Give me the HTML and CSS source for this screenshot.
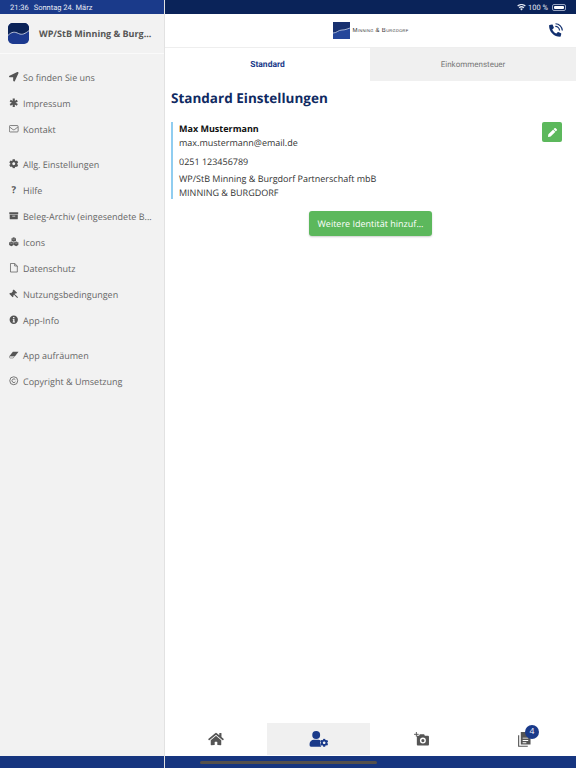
FILE: index.html
```html
<!DOCTYPE html>
<html lang="de">
<head>
    <meta charset="UTF-8">
    <meta name="viewport" content="width=device-width, initial-scale=1.0">
    <title>WP/StB Minning &amp; Burgdorf</title>
    <link rel="stylesheet" href="styles.css">
</head>
<body>
    <svg class="defs" width="0" height="0">
        <symbol id="cog" viewBox="0 0 512 512"><path d="M487.4 315.7l-42.6-24.6c4.3-23.2 4.3-47 0-70.2l42.6-24.6c4.9-2.8 7.1-8.6 5.5-14-11.1-35.6-30-67.8-54.7-94.6-3.8-4.1-10-5.1-14.8-2.3L380.8 110c-17.9-15.4-38.5-27.3-60.8-35.1V25.8c0-5.6-3.9-10.5-9.4-11.7-36.7-8.2-74.3-7.8-109.2 0-5.5 1.2-9.4 6.1-9.4 11.7V75c-22.2 7.9-42.8 19.8-60.8 35.1L88.7 85.5c-4.9-2.8-11-1.9-14.8 2.3-24.7 26.7-43.6 58.9-54.7 94.6-1.7 5.4.6 11.2 5.5 14L67.3 221c-4.3 23.2-4.3 47 0 70.2l-42.6 24.6c-4.9 2.8-7.1 8.6-5.5 14 11.1 35.6 30 67.8 54.7 94.6 3.8 4.1 10 5.1 14.8 2.3l42.6-24.6c17.9 15.4 38.5 27.3 60.8 35.1v49.2c0 5.6 3.9 10.5 9.4 11.7 36.7 8.2 74.3 7.8 109.2 0 5.5-1.2 9.4-6.1 9.4-11.7v-49.2c22.2-7.9 42.8-19.8 60.8-35.1l42.6 24.6c4.9 2.8 11 1.9 14.8-2.3 24.7-26.7 43.6-58.9 54.7-94.6 1.5-5.5-.7-11.3-5.6-14.1zM256 336c-44.1 0-80-35.9-80-80s35.9-80 80-80 80 35.9 80 80-35.9 80-80 80z"/></symbol>
    </svg>

    <div class="app">
        <aside class="sidebar">
            <div class="status status-left"><span>21:36</span><span>Sonntag 24. März</span></div>
            <div class="side-head">
                <svg class="app-logo" viewBox="0 0 22 22">
                    <rect width="22" height="22" rx="5" fill="#1c3a8f"/>
                    <path d="M0 13 C4 9 7 9 11 11 C15 13 18 11 22 8 V5 A5 5 0 0 0 17 0 H5 A5 5 0 0 0 0 5 Z" fill="#0b2358"/>
                    <path d="M0 13 C4 9 7 9 11 11 C15 13 18 11 22 8" fill="none" stroke="#e8ecf4" stroke-width=".8"/>
                </svg>
                <span class="side-title">WP/StB Minning &amp; Burg...</span>
            </div>
            <nav class="side-nav">
                <div class="nav-group">
                    <a class="nav-item"><svg class="nav-icon" viewBox="0 0 512 512"><path d="M444.52 3.52L28.74 195.42c-47.97 22.39-31.98 92.75 19.19 92.75h175.91v175.91c0 51.17 70.36 67.17 92.75 19.19l191.9-415.78c15.99-38.39-25.59-79.97-63.97-63.97z"/></svg>So finden Sie uns</a>
                    <a class="nav-item"><svg class="nav-icon" viewBox="0 0 16 16"><path d="M8 1v14M2 4.500l12 7M14 4.500l-12 7" fill="none" stroke="currentColor" stroke-width="3.600"/></svg>Impressum</a>
                    <a class="nav-item"><svg class="nav-icon" viewBox="0 0 16 16"><rect x=".6" y="2.600" width="14.800" height="10.800" rx="1.500" fill="none" stroke="currentColor" stroke-width="1.200"/><path d="M1 5l5.500 4.300q1.500 1 3 0L15 5" fill="none" stroke="currentColor" stroke-width="1.200"/></svg>Kontakt</a>
                </div>
                <div class="nav-group">
                    <a class="nav-item"><svg class="nav-icon"><use href="#cog"/></svg>Allg. Einstellungen</a>
                    <a class="nav-item"><span class="nav-icon nav-glyph">?</span>Hilfe</a>
                    <a class="nav-item"><svg class="nav-icon" viewBox="0 0 16 16"><path d="M.5 2h15v3.500H.5zM1.200 6.500h13.600V13a1 1 0 0 1-1 1H2.200a1 1 0 0 1-1-1zM5.500 8v1.400h5V8z" fill-rule="evenodd"/></svg>Beleg-Archiv (eingesendete B...</a>
                    <a class="nav-item"><svg class="nav-icon" viewBox="0 0 16 16"><path d="M8 .5l3.800 1.500v4.400L8 8 4.200 6.400V2zM4 7.500l3.800 1.500v4.400L4 15.500.2 13.400V9zM12 7.500L15.800 9v4.400L12 15.500l-3.800-2.100V9z"/><path d="M4.600 2.600L8 4l3.400-1.400M.8 9.400L4 10.700l3.200-1.300M8.800 9.400l3.200 1.300 3.200-1.300" fill="none" stroke="#f2f2f2" stroke-width=".6"/></svg>Icons</a>
                    <a class="nav-item"><svg class="nav-icon" viewBox="0 0 16 16"><path d="M2.500 .8h7L14 5v10.200H2.500zM9.500 .8V5H14" fill="none" stroke="currentColor" stroke-width="1.200" stroke-linejoin="round"/></svg>Datenschutz</a>
                    <a class="nav-item"><svg class="nav-icon" viewBox="0 0 16 16"><path d="M8 .8l5.600 5.400-2 2-1-1-1.300 1.300 6 5.200-1.500 1.600-5.400-5.700-1.300 1.300 1 1-2 2L.4 8.200l2-2 1 1 3-3-.4-1.200z"/></svg>Nutzungsbedingungen</a>
                    <a class="nav-item"><svg class="nav-icon" viewBox="0 0 16 16"><path d="M8 1a7 7 0 1 0 0 14A7 7 0 0 0 8 1zM6.800 3.200h2.400v2.200H6.800zM6.200 6.600h3v4.400h.8v1.600H6.200V11h.8V8.200h-.8z" fill-rule="evenodd"/></svg>App-Info</a>
                </div>
                <div class="nav-group">
                    <a class="nav-item"><svg class="nav-icon" viewBox="0 0 16 16"><path d="M6.500 3H16l-5.500 7H1z"/><path d="M1 10.400l-.6 1.800 1 1.300H7l2.400-3.100z" fill="none" stroke="currentColor" stroke-width=".9"/></svg>App aufräumen</a>
                    <a class="nav-item"><svg class="nav-icon" viewBox="0 0 16 16"><circle cx="8" cy="8" r="6.700" fill="none" stroke="currentColor" stroke-width="1.300"/><path d="M10.700 6.200a3.100 3.100 0 1 0 0 3.600" fill="none" stroke="currentColor" stroke-width="1.300"/></svg>Copyright &amp; Umsetzung</a>
                </div>
            </nav>
            <div class="bottom-strip"></div>
        </aside>

        <main class="main">
            <div class="status status-right">
                <svg class="wifi" viewBox="0 0 16 12"><path d="M8 11.500L5.600 8.600a3.600 3.600 0 0 1 4.800 0zM4.500 7.400L3 5.600a7.400 7.400 0 0 1 10 0l-1.500 1.800a5.200 5.200 0 0 0-7 0zM1.900 4.400L.4 2.600a11.400 11.400 0 0 1 15.200 0l-1.500 1.800a9.100 9.100 0 0 0-12.200 0z"/></svg>
                <span>100 %</span>
                <span class="battery"><span class="battery-fill"></span></span>
            </div>

            <header class="top-bar">
                <div class="brand">
                    <svg class="brand-mark" viewBox="0 0 17 17">
                        <rect width="17" height="17" fill="#17306f"/>
                        <path d="M0 11 C4 11 5 8 9 8 C12 8 14 7 17 6 V17 H0 Z" fill="#25479a"/>
                        <path d="M0 11 C4 11 5 8 9 8 C12 8 14 7 17 6" fill="none" stroke="#dfe6f2" stroke-width=".7"/>
                    </svg>
                    <span class="brand-name">Minning &amp; Burgdorf</span>
                </div>
                <svg class="phone" viewBox="0 0 16 16">
                    <path transform="translate(14.200 1.600) scale(-.0255 .0255)" d="M493.4 24.6l-104-24c-11.3-2.6-22.9 3.3-27.5 13.9l-48 112c-4.2 9.8-1.4 21.3 6.9 28l60.6 49.6c-36 76.7-98.9 140.5-177.2 177.2l-49.6-60.6c-6.8-8.3-18.2-11.1-28-6.9l-112 48C3.9 366.5-2 378.1.6 389.4l24 104C27.1 504.2 36.7 512 48 512c256.1 0 464-207.5 464-464 0-11.2-7.7-20.9-18.6-23.4z"/>
                    <path d="M7.800 3.700a4.500 4.500 0 0 1 4.500 4.400M8 .8a7.500 7.500 0 0 1 7.300 7.300" fill="none" stroke="currentColor" stroke-width="1.300"/>
                </svg>
            </header>

            <div class="tabs">
                <div class="tab tab-active">Standard</div>
                <div class="tab">Einkommensteuer</div>
            </div>

            <section class="content">
                <h1>Standard Einstellungen</h1>
                <div class="identity">
                    <div class="identity-text">
                        <div class="identity-name">Max Mustermann</div>
                        <div>max.mustermann@email.de</div>
                        <div class="identity-phone">0251 123456789</div>
                        <div class="identity-firm">WP/StB Minning &amp; Burgdorf Partnerschaft mbB</div>
                        <div>MINNING &amp; BURGDORF</div>
                    </div>
                    <button class="edit-btn">
                        <svg viewBox="0 0 512 512"><path d="M497.9 142.1l-46.1 46.1c-4.7 4.7-12.3 4.7-17 0l-111-111c-4.7-4.7-4.7-12.3 0-17l46.1-46.1c18.7-18.7 49.1-18.7 67.9 0l60.1 60.1c18.8 18.7 18.8 49.1 0 67.9zM284.2 99.8L21.6 362.4.4 483.9c-2.9 16.4 11.4 30.6 27.8 27.8l121.5-21.3 262.6-262.6c4.7-4.7 4.7-12.3 0-17l-111-111c-4.8-4.7-12.4-4.7-17.1 0z"/></svg>
                    </button>
                </div>
                <div class="add-row"><button class="add-btn">Weitere Identität hinzuf...</button></div>
            </section>

            <nav class="tab-bar">
                <a class="tab-cell">
                    <svg class="home" viewBox="0 0 576 512"><path d="M280.37 148.26L96 300.11V464a16 16 0 0 0 16 16l112.06-.29a16 16 0 0 0 15.92-16V368a16 16 0 0 1 16-16h64a16 16 0 0 1 16 16v95.64a16 16 0 0 0 16 16.05L464 480a16 16 0 0 0 16-16V300L295.67 148.26a12.19 12.19 0 0 0-15.3 0zM571.6 251.47L488 182.56V44.05a12 12 0 0 0-12-12h-56a12 12 0 0 0-12 12v72.61L318.47 43a48 48 0 0 0-61 0L4.34 251.47a12 12 0 0 0-1.6 16.9l25.5 31A12 12 0 0 0 45.15 301l235.22-193.74a12.19 12.19 0 0 1 15.3 0L530.9 301a12 12 0 0 0 16.9-1.6l25.5-31a12 12 0 0 0-1.7-16.93z"/></svg>
                </a>
                <a class="tab-cell tab-cell-active">
                    <svg class="user-cog" viewBox="0 0 20 17">
                        <circle cx="7" cy="4.200" r="4.200"/>
                        <path d="M0 15.200v-1.700C0 11 2.200 9.200 4.600 9.200h4.800c.8 0 1.500.2 2.100.5-.4 1.800-.2 4.200.8 7H1.500A1.500 1.500 0 0 1 0 15.200z"/>
                        <use href="#cog" x="11" y="8" width="9" height="9"/>
                    </svg>
                </a>
                <a class="tab-cell">
                    <svg class="camera" viewBox="0 0 16 15">
                        <path fill-rule="evenodd" d="M3 4h2.400l.8-1.700h4.600l.8 1.700H15a1 1 0 0 1 1 1v8.500a1 1 0 0 1-1 1H4a1 1 0 0 1-1-1zM9.500 6a3.200 3.200 0 1 0 0 6.400 3.200 3.200 0 0 0 0-6.400zm0 1.500a1.700 1.700 0 1 1 0 3.400 1.700 1.700 0 0 1 0-3.400z"/>
                        <path d="M2.500 0v5M0 2.500h5" fill="none" stroke="currentColor" stroke-width="1"/>
                    </svg>
                </a>
                <a class="tab-cell">
                    <span class="docs">
                        <svg class="doc" viewBox="0 0 14 16">
                            <path d="M.7 3.500v11.800h9.800" fill="none" stroke="currentColor" stroke-width="1.200"/>
                            <path fill-rule="evenodd" d="M3 0h7l3.500 3.500V13.500H3zM5 6v1h6V6zm0 2.500v1h6v-1zM5 11v1h4v-1z"/>
                        </svg>
                        <span class="badge">4</span>
                    </span>
                </a>
            </nav>

            <div class="bottom-strip"><span class="home-indicator"></span></div>
        </main>
    </div>
</body>
</html>
```

FILE: styles.css
```css
* {
    box-sizing: border-box;
}
html, body {
    margin: 0;
    height: 100%;
}
body {
    font-family: "Open Sans", sans-serif;
    color: #222;
    overflow: hidden;
    text-rendering: geometricPrecision;
}
.defs {
    display: block;
    height: 0;
}
.app {
    display: flex;
    height: 768px;
}

/* Statusleiste */
.status {
    height: 14px;
    flex: none;
    display: flex;
    align-items: center;
    color: #e6eaf4;
    font-family: Roboto, sans-serif;
    font-size: 7.5px;
}
.status-left {
    background-color: #1a3a8a;
    gap: 5px;
    padding-left: 10px;
}
.status-right {
    background-color: #0a2359;
    justify-content: flex-end;
    gap: 2px;
    padding-right: 10px;
}
.wifi {
    width: 9px;
    height: 7px;
    fill: #e6eaf4;
}
.battery {
    width: 14px;
    height: 7px;
    margin-left: 2px;
    padding: 1px;
    border: 1px solid #9aa6c2;
    border-radius: 2px;
    display: flex;
}
.battery-fill {
    flex: 1;
    background-color: #fff;
    border-radius: 1px;
}

/* Seitenmenue */
.sidebar {
    width: 165px;
    flex: none;
    display: flex;
    flex-direction: column;
    background-color: #f2f2f2;
    border-right: 1px solid #e2e2e2;
}
.side-head {
    height: 40px;
    flex: none;
    display: flex;
    align-items: center;
    gap: 10px;
    padding-left: 8px;
    border-bottom: 1px solid #fafafa;
}
.app-logo {
    width: 21px;
    height: 21px;
    flex: none;
}
.side-title {
    font-size: 9px;
    font-weight: 700;
    color: #555;
    white-space: nowrap;
}
.side-nav {
    flex: 1;
    padding-top: 10px;
}
.nav-group {
    margin-bottom: 9px;
}
.nav-item {
    height: 26px;
    display: flex;
    align-items: center;
    gap: 4.5px;
    padding-left: 9px;
    font-size: 9px;
    color: #666;
    white-space: nowrap;
}
.nav-icon {
    width: 9.5px;
    height: 9.5px;
    flex: none;
    fill: #555;
    color: #555;
}
.nav-glyph {
    font-size: 9.5px;
    font-weight: 700;
    line-height: 9.5px;
    text-align: center;
}

/* Kopfzeile */
.main {
    flex: 1;
    min-width: 0;
    display: flex;
    flex-direction: column;
    background-color: #fff;
}
.top-bar {
    height: 33px;
    flex: none;
    display: flex;
    align-items: center;
    justify-content: center;
    position: relative;
}
.brand {
    display: flex;
    align-items: center;
    gap: 3px;
}
.brand-mark {
    width: 17px;
    height: 17px;
}
.brand-name {
    font-family: "Liberation Sans", sans-serif;
    font-size: 6px;
    font-variant: small-caps;
    letter-spacing: .3px;
    color: #333;
}
.phone {
    position: absolute;
    right: 13px;
    top: 9px;
    width: 15px;
    height: 15px;
    fill: #12306f;
    color: #12306f;
}

/* Reiter */
.tabs {
    display: grid;
    grid-template-columns: 205px 206px;
    height: 34px;
    flex: none;
    border-top: 1px solid #eee;
}
.tab {
    display: flex;
    align-items: center;
    justify-content: center;
    background-color: #f0f0f0;
    color: #777;
    font-family: Roboto, sans-serif;
    font-size: 8px;
}
.tab-active {
    background-color: #fff;
    color: #1a3a8a;
    font-size: 8.5px;
    font-weight: 700;
}

/* Inhalt */
.content {
    flex: 1;
    padding: 8px 14px 0 6px;
}
h1 {
    margin: 0 0 15px;
    font-size: 13.500px;
    line-height: 18px;
    font-weight: 700;
    color: #0f2a62;
}
.identity {
    display: flex;
    justify-content: space-between;
    align-items: flex-start;
    border-left: 2px solid #90cdf0;
    padding-left: 6px;
}
.identity-text {
    font-size: 9px;
    line-height: 13.500px;
    color: #333;
}
.identity-name {
    font-weight: 700;
    color: #111;
}
.identity-phone {
    margin-top: 6px;
}
.identity-firm {
    margin-top: 3.500px;
}
.edit-btn {
    width: 20px;
    height: 20px;
    padding: 0;
    border: none;
    border-radius: 2px;
    background-color: #5cb85c;
    display: flex;
    align-items: center;
    justify-content: center;
}
.edit-btn svg {
    width: 9px;
    height: 9px;
    fill: #fff;
}
.add-row {
    display: flex;
    justify-content: center;
    margin-top: 12px;
    padding-left: 8px;
}
.add-btn {
    height: 25px;
    padding: 0 8.5px;
    border: none;
    border-radius: 3px;
    background-color: #5cb85c;
    color: #fff;
    font-family: "Open Sans", sans-serif;
    font-size: 9px;
    text-rendering: geometricPrecision;
    box-shadow: 0 1px 2px rgba(0,0,0,0.2);
}

/* Untere Leiste */
.tab-bar {
    height: 32px;
    flex: none;
    display: grid;
    grid-template-columns: 102px 103px 103px 103px;
    margin-bottom: 1px;
}
.tab-cell {
    display: flex;
    align-items: center;
    justify-content: center;
    color: #555;
    fill: #555;
}
.tab-cell-active {
    background-color: #f0f0f0;
    fill: #1a3a8a;
}
.home {
    width: 16px;
    height: 14px;
}
.user-cog {
    width: 20px;
    height: 16px;
}
.camera {
    width: 15px;
    height: 14px;
}
.docs {
    position: relative;
    display: flex;
}
.doc {
    width: 13px;
    height: 15px;
}
.badge {
    position: absolute;
    top: -7px;
    left: 7px;
    width: 14px;
    height: 14px;
    border-radius: 50%;
    background-color: #1a3a8a;
    color: #fff;
    font-size: 8.500px;
    line-height: 14px;
    text-align: center;
}
.bottom-strip {
    height: 12px;
    flex: none;
    background-color: #16357f;
    display: flex;
    align-items: center;
    padding-left: 35px;
}
.home-indicator {
    width: 177px;
    height: 3px;
    border-radius: 2px;
    background-color: #55504a;
}
```
